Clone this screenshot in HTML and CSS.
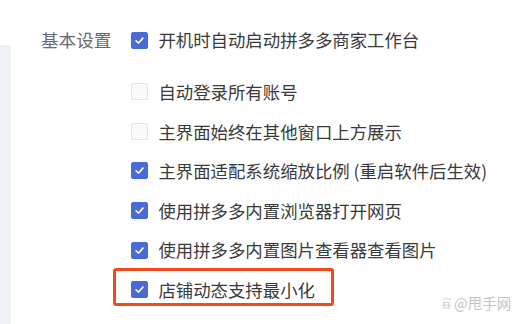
FILE: index.html
```html
<!DOCTYPE html>
<html lang="zh-CN">
<head>
<meta charset="utf-8">
<title>基本设置</title>
<link rel="stylesheet" href="styles.css">
</head>
<body>
<div class="page">
  <aside class="sidebar"></aside>
  <main class="main">
    <section class="group">
      <div class="group-label">基本设置</div>
      <div class="options">
        <label class="option first"><span class="box checked"><svg viewBox="0 0 17 17"><path d="M4.6 8.8 L7.4 11.4 L12.4 5.8" /></svg></span><span class="text">开机时自动启动拼多多商家工作台</span></label>
        <label class="option"><span class="box"></span><span class="text">自动登录所有账号</span></label>
        <label class="option"><span class="box"></span><span class="text">主界面始终在其他窗口上方展示</span></label>
        <label class="option"><span class="box checked"><svg viewBox="0 0 17 17"><path d="M4.6 8.8 L7.4 11.4 L12.4 5.8" /></svg></span><span class="text">主界面适配系统缩放比例 (重启软件后生效)</span></label>
        <label class="option"><span class="box checked"><svg viewBox="0 0 17 17"><path d="M4.6 8.8 L7.4 11.4 L12.4 5.8" /></svg></span><span class="text">使用拼多多内置浏览器打开网页</span></label>
        <label class="option"><span class="box checked"><svg viewBox="0 0 17 17"><path d="M4.6 8.8 L7.4 11.4 L12.4 5.8" /></svg></span><span class="text">使用拼多多内置图片查看器查看图片</span></label>
        <label class="option highlight"><span class="box checked"><svg viewBox="0 0 17 17"><path d="M4.6 8.8 L7.4 11.4 L12.4 5.8" /></svg></span><span class="text">店铺动态支持最小化</span></label>
      </div>
    </section>
  </main>
  <div class="watermark"><svg class="wm-icon" viewBox="0 0 12 13"><path d="M1 3.5 L6 1 L11 3.5 M2 6 H10 M3.5 6 V12 M8.5 6 V12 M1 9 H11 M2 12 H10" /></svg><span>@甩手网</span></div>
</div>
</body>
</html>
```

FILE: styles.css
```css
*, *::before, *::after { box-sizing: border-box; }

html, body {
  margin: 0;
  padding: 0;
  background: #ffffff;
}

body {
  font-family: "Noto Sans CJK SC", "Noto Sans", sans-serif;
  color: #3a3a3a;
}

.page {
  position: relative;
  display: flex;
  width: 516px;
  height: 324px;
  overflow: hidden;
}

.sidebar {
  width: 11px;
  margin-top: 45px;
  background: #eef1f6;
  flex: none;
}

.main {
  flex: 1;
  padding-left: 30px;
  padding-top: 20px;
}

.group {
  display: flex;
  gap: 19px;
}

.group-label {
  font-size: 17.6px;
  line-height: 40px;
  color: #666a70;
  white-space: nowrap;
}

.options {
  display: flex;
  flex-direction: column;
}

.option {
  position: relative;
  display: flex;
  align-items: center;
  height: 39.6px;
  font-size: 17.4px;
  white-space: nowrap;
}

.option.first {
  height: 40px;
  margin-bottom: 12px;
}

.box {
  width: 17px;
  height: 17px;
  border-radius: 2px;
  border: 1px solid #e2e4e8;
  background: #fafafa;
  margin-left: 1px;
  margin-right: 10px;
  flex: none;
  display: flex;
}

.box.checked {
  background: #4a6bd6;
  border-color: #4a6bd6;
}

.box svg {
  width: 15px;
  height: 15px;
}

.box path {
  fill: none;
  stroke: #ffffff;
  stroke-width: 1.8;
  stroke-linecap: round;
  stroke-linejoin: round;
}

.text {
  line-height: 1;
}

.highlight::before {
  content: "";
  position: absolute;
  left: -17px;
  top: -1.5px;
  width: 221px;
  height: 38px;
  border: 3px solid #f24a1c;
  border-radius: 3px;
}

.watermark {
  position: absolute;
  left: 441px;
  top: 292px;
  display: flex;
  align-items: center;
  gap: 2px;
  font-size: 14.5px;
  color: #c4c4c4;
  font-family: "Noto Sans CJK SC", sans-serif;
}

.wm-icon {
  width: 11px;
  height: 12px;
}

.wm-icon path {
  fill: none;
  stroke: #cccccc;
  stroke-width: 1;
}
```
